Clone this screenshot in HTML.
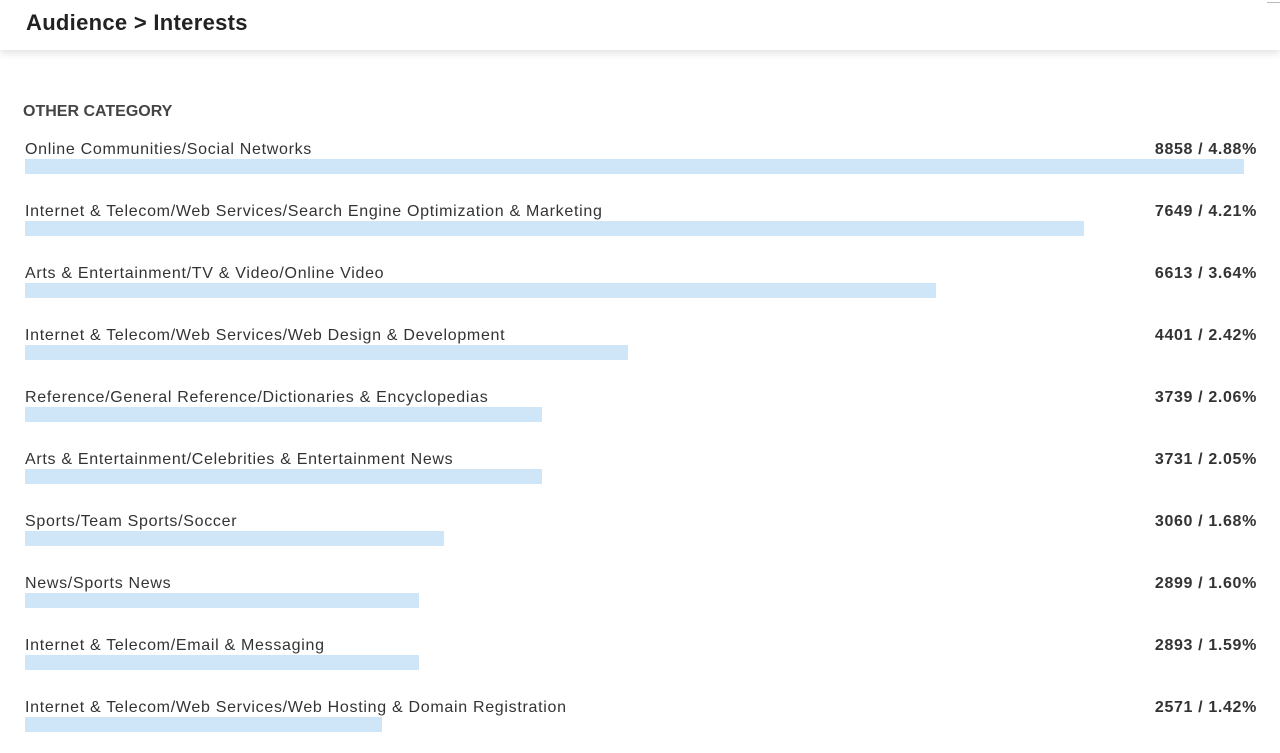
<!DOCTYPE html>
<html><head><meta charset="utf-8"><style>
body{margin:0;width:1280px;height:753px;overflow:hidden;background:#fff;font-family:"Liberation Sans",sans-serif;color:#333}
.hd{position:absolute;left:0;top:0;width:1280px;height:50px;background:#fff;box-shadow:0 3px 8px rgba(0,0,0,.12)}
.hd h1{margin:0;position:absolute;left:26px;top:10px;font-size:22px;font-weight:bold;color:#222;letter-spacing:0.3px}
.sec{position:absolute;left:23px;top:103px;font-size:16px;font-weight:bold;color:#444}
.row{position:absolute;left:25px;width:1232px;height:40px}
.lab{position:absolute;left:0;top:-8px;font-size:16px;color:#333;letter-spacing:0.7px}
.val{position:absolute;right:0;top:-8px;font-size:16px;font-weight:bold;color:#333;letter-spacing:0.65px}
.bar{position:absolute;left:0;top:10px;height:15px;background:#cfe5f8}
</style></head><body>
<div class="hd"><h1>Audience &gt; Interests</h1></div>
<div style="position:absolute;right:0;top:2px;width:13px;height:1px;background:#bbb"></div>
<div class="sec">OTHER CATEGORY</div>
<div class="row" style="top:149px"><div class="lab">Online Communities/Social Networks</div><div class="val">8858 / 4.88%</div><div class="bar" style="width:1219px"></div></div>
<div class="row" style="top:211px"><div class="lab">Internet &amp; Telecom/Web Services/Search Engine Optimization &amp; Marketing</div><div class="val">7649 / 4.21%</div><div class="bar" style="width:1059px"></div></div>
<div class="row" style="top:273px"><div class="lab">Arts &amp; Entertainment/TV &amp; Video/Online Video</div><div class="val">6613 / 3.64%</div><div class="bar" style="width:911px"></div></div>
<div class="row" style="top:335px"><div class="lab">Internet &amp; Telecom/Web Services/Web Design &amp; Development</div><div class="val">4401 / 2.42%</div><div class="bar" style="width:603px"></div></div>
<div class="row" style="top:397px"><div class="lab">Reference/General Reference/Dictionaries &amp; Encyclopedias</div><div class="val">3739 / 2.06%</div><div class="bar" style="width:517px"></div></div>
<div class="row" style="top:459px"><div class="lab">Arts &amp; Entertainment/Celebrities &amp; Entertainment News</div><div class="val">3731 / 2.05%</div><div class="bar" style="width:517px"></div></div>
<div class="row" style="top:521px"><div class="lab">Sports/Team Sports/Soccer</div><div class="val">3060 / 1.68%</div><div class="bar" style="width:419px"></div></div>
<div class="row" style="top:583px"><div class="lab">News/Sports News</div><div class="val">2899 / 1.60%</div><div class="bar" style="width:394px"></div></div>
<div class="row" style="top:645px"><div class="lab">Internet &amp; Telecom/Email &amp; Messaging</div><div class="val">2893 / 1.59%</div><div class="bar" style="width:394px"></div></div>
<div class="row" style="top:707px"><div class="lab">Internet &amp; Telecom/Web Services/Web Hosting &amp; Domain Registration</div><div class="val">2571 / 1.42%</div><div class="bar" style="width:357px"></div></div>
</body></html>
